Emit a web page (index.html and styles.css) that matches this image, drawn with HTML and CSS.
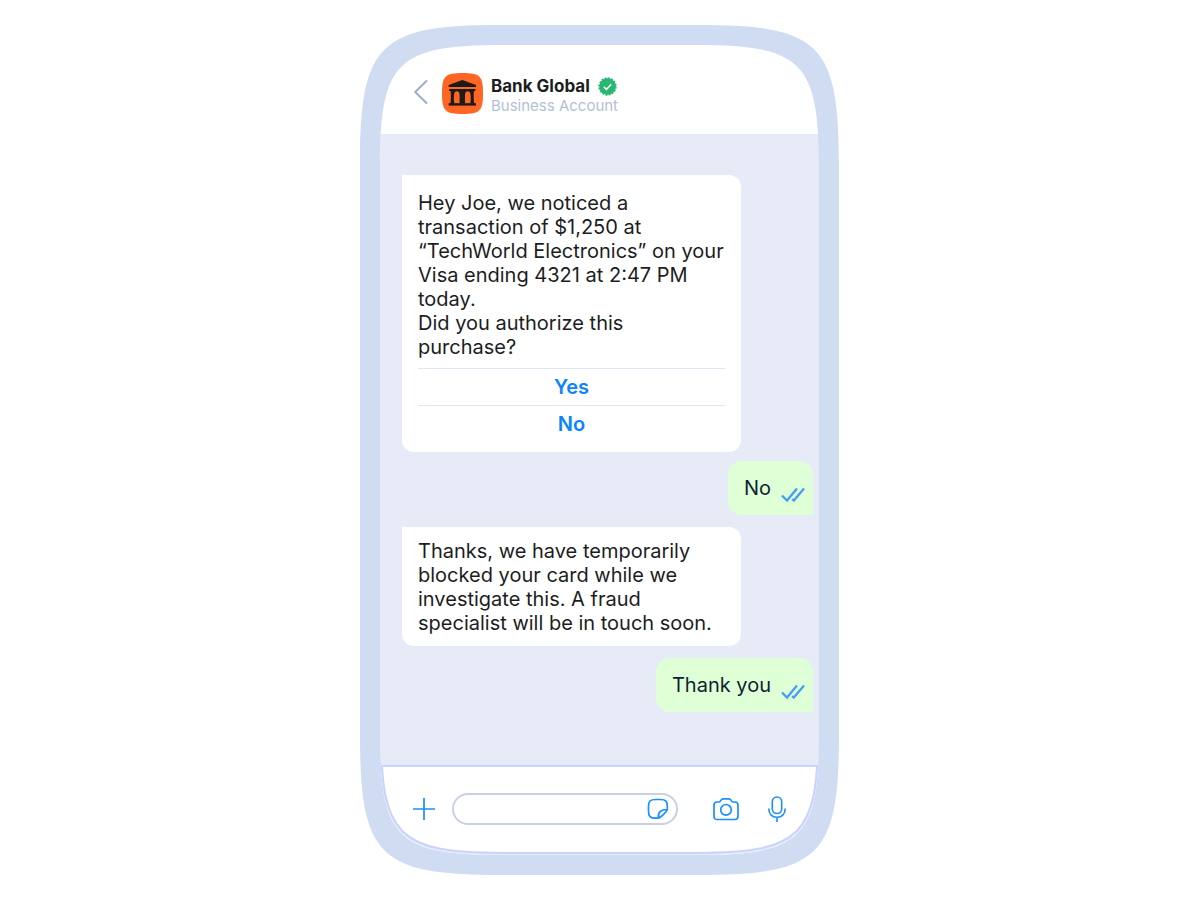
FILE: index.html
```html
<!DOCTYPE html>
<html lang="en">
<head>
<meta charset="utf-8">
<meta name="viewport" content="width=device-width, initial-scale=1">
<title>Bank Global</title>
<link rel="stylesheet" href="styles.css">
</head>
<body>
<main class="phone">
  <header class="header">
    <button class="icon-button back" type="button" aria-label="Back">
      <svg width="14" height="24" viewBox="0 0 14 24" fill="none" stroke="#9aabc6" stroke-width="1.8" stroke-linecap="round" stroke-linejoin="round"><path d="M12.500 1 1.200 12 12.500 23"/></svg>
    </button>
    <svg class="logo" width="41" height="41" viewBox="0 0 41 41" aria-hidden="true">
      <path fill="#ff6624" d="M0 20.500C0 3 3 0 20.500 0S41 3 41 20.500 38 41 20.500 41 0 38 0 20.500Z"/>
      <g fill="#1d1a19">
        <path d="M20.300 7 34 12v2H6.700V12Z"/>
        <path d="M6.700 30.200H34v2.400H6.700Z"/>
        <path d="M7.200 16h26.200v1.900H32c-.5 4-.4 8.500.2 12.800h-4c.8-4 .7-7.500.1-10-.4-1.600-1.200-2.400-2.500-2.400-1.800 0-2.800 1.400-2.800 3.500v8.900h-5.400V21.800c0-2.100-1-3.500-2.800-3.500-1.300 0-2.100.8-2.500 2.400-.6 2.500-.7 6 .1 10h-4c.6-4.300.7-8.800.2-12.800H7.200Z"/>
      </g>
    </svg>
    <div class="account">
      <h1 class="account-name">Bank Global
        <svg width="19" height="19" viewBox="-10 -10 20 20" role="img" aria-label="Verified"><circle r="8.700" fill="#27b770"/><circle r="8.700" fill="none" stroke="#27b770" stroke-width="1.900" stroke-dasharray="2.100 1.316"/><path d="m-3.800.4 2.700 2.700 5-5.400" fill="none" stroke="#fff" stroke-width="1.700"/></svg>
      </h1>
      <p class="account-type">Business Account</p>
    </div>
  </header>

  <section class="chat" aria-label="Conversation">
    <article class="bubble received prompt">
      <p>Hey Joe, we noticed a transaction of $1,250 at “TechWorld Electronics” on your Visa ending 4321 at 2:47 PM today.</p>
      <p>Did you authorize this purchase?</p>
      <div class="choices">
        <button class="choice" type="button">Yes</button>
        <button class="choice" type="button">No</button>
      </div>
    </article>
    <article class="bubble sent">
      <p>No</p>
      <svg class="ticks" width="24" height="16" viewBox="0 0 24 16" role="img" aria-label="Read"><path d="m1 8.500 5 5L16 1.500M11.200 12l1.600 1.500L23 1.500" fill="none" stroke="#459df2" stroke-width="2.300"/></svg>
    </article>
    <article class="bubble received">
      <p>Thanks, we have temporarily blocked your card while we investigate this. A fraud specialist will be in touch soon.</p>
    </article>
    <article class="bubble sent">
      <p>Thank you</p>
      <svg class="ticks" width="24" height="16" viewBox="0 0 24 16" role="img" aria-label="Read"><path d="m1 8.500 5 5L16 1.500M11.200 12l1.600 1.500L23 1.500" fill="none" stroke="#459df2" stroke-width="2.300"/></svg>
    </article>
  </section>

  <form class="composer">
    <button class="icon-button" type="button" aria-label="Add attachment">
      <svg width="22" height="22" viewBox="0 0 22 22" fill="none" stroke="#1890ff" stroke-width="1.700"><path d="M11 0v22M0 11h22"/></svg>
    </button>
    <div class="field">
      <input class="field-input" type="text" aria-label="Message">
      <button class="icon-button" type="button" aria-label="Stickers">
        <svg width="22" height="22" viewBox="0 0 22 22" fill="none" stroke="#1890ff" stroke-width="1.700" stroke-linejoin="round"><path d="M20.300 11.500V8.500C20.300 3 18.500 1.500 13.500 1.500h-5C3.200 1.500 1.500 3.200 1.500 8.500v4.500c0 5.300 1.700 7.200 7 7.200h2.800c2.800-1 8.300-6.400 9-8.700ZM11.300 20.200C11 14 14 11.400 20.300 11.500"/></svg>
      </button>
    </div>
    <div class="media">
      <button class="icon-button" type="button" aria-label="Camera">
        <svg width="26" height="24" viewBox="0 0 26 24" fill="none" stroke="#1890ff" stroke-width="1.700" stroke-linejoin="round"><path d="M1 19V8.200C1 5.800 2 5 4 5h1.800c1.200 0 1.500-.4 2-1.500.6-1.300 1-1.700 2.500-1.700h5.400c1.500 0 1.900.4 2.500 1.700.5 1.100.8 1.500 2 1.500H22c2 0 3 .8 3 3.200V19c0 2.600-1 3.500-3.300 3.500H4.300C2 22.500 1 21.600 1 19Z"/><circle cx="13" cy="12.800" r="5.300"/></svg>
      </button>
      <button class="icon-button" type="button" aria-label="Record voice message">
        <svg width="18" height="26" viewBox="0 0 18 26" fill="none" stroke="#1890ff" stroke-width="1.600"><rect x="4.300" y="1" width="9.400" height="16.500" rx="4.700"/><path d="M.8 12.500c0 5.300 3 8.700 8.200 8.700s8.200-3.400 8.200-8.700M9 21.200V26"/></svg>
      </button>
    </div>
  </form>

  <svg class="frame" viewBox="0 0 480 850" preserveAspectRatio="none" aria-hidden="true">
    <defs><clipPath id="dock"><rect x="0" y="740" width="480" height="110"/></clipPath></defs>
    <path fill="#d0dcf2" fill-rule="evenodd" d="M0 140C0 19 19 0 140 0H339C460 0 479 19 479 140V710C479 831 460 850 339 850H140C19 850 0 831 0 710ZM20 142V708C20 813 37 830 142 830H337C442 830 459 813 459 708V142C459 37 442 20 337 20H142C37 20 20 37 20 142Z"/>
    <g fill="none" clip-path="url(#dock)">
      <path stroke="#e8ecf8" stroke-width="2" d="M21 708C21 812 38 829 142 829H337C441 829 458 812 458 708"/>
      <path stroke="#c8d3ff" stroke-width="2" d="M21 708C21 810 38 828 142 828H337C441 828 458 810 458 708M21 741H458"/>
    </g>
  </svg>
</main>
</body>
</html>
```
FILE: styles.css
```css
* {
  box-sizing: border-box;
}

body {
  margin: 0;
  padding: 25px 16px;
  background: #fff;
  color: #1d1d1f;
  font-family: Inter, "Liberation Sans", sans-serif;
  font-size: 20px;
  line-height: 24px;
}

h1,
p {
  margin: 0;
}

.phone {
  position: relative;
  max-width: 480px;
  margin: 0 auto;
  padding: 20px;
}

.frame {
  position: absolute;
  inset: 0;
  width: 100%;
  height: 100%;
  pointer-events: none;
}

.icon-button {
  display: flex;
  padding: 0;
  border: 0;
  background: none;
  cursor: pointer;
}

.header {
  display: flex;
  align-items: center;
  padding: 25px 34px 18px;
}

.back {
  margin-bottom: 2px;
}

.logo {
  flex: none;
  margin: 0 8px 0 14px;
}

.account {
  padding-top: 6px;
}

.account-name {
  display: flex;
  align-items: center;
  gap: 8px;
  font-size: 17px;
  font-weight: 700;
  line-height: 20px;
}

.account-type {
  color: #b3bfd6;
  font-size: 15px;
  font-weight: 400;
  line-height: 20px;
}

.chat {
  display: flex;
  flex-direction: column;
  gap: 12px;
  margin-right: 1px;
  padding: 41px 6px 53px 22px;
  background: #e7ebf7;
}

.bubble {
  padding: 12px 16px 11px;
  border-radius: 12px;
}

.received {
  align-self: flex-start;
  width: 339px;
  max-width: 90%;
  border-top-left-radius: 0;
  background: #fff;
}

.prompt {
  margin-bottom: -3px;
  padding: 16px 16px 10px;
}

.choices {
  margin-top: 9px;
}

.choice {
  display: block;
  width: 100%;
  height: 37px;
  padding: 0;
  border: 0;
  border-top: 1px solid #dfe6f4;
  background: none;
  color: #0a84ff;
  font: inherit;
  font-weight: 600;
  cursor: pointer;
}

.sent {
  display: flex;
  align-items: flex-end;
  align-self: flex-end;
  gap: 10px;
  padding: 15px 8px 12px 16px;
  border-radius: 14px 14px 0;
  border-bottom-left-radius: 14px;
  background: #dfffd6;
  color: #0f1f33;
}

.sent p {
  padding-bottom: 3px;
}

.composer {
  display: flex;
  align-items: center;
  padding: 28px 34px 30px 33px;
}

.field {
  display: flex;
  flex: 1;
  align-items: center;
  min-width: 0;
  height: 32px;
  margin: 0 35px 0 17px;
  padding-right: 7px;
  border: 2px solid #c8d1e3;
  border-radius: 16px;
}

.field-input {
  flex: 1;
  min-width: 0;
  height: 28px;
  padding: 0 0 0 12px;
  border: 0;
  outline: 0;
  background: none;
  color: inherit;
  font: inherit;
  font-size: 16px;
}

.media {
  display: flex;
  align-items: center;
  gap: 29px;
}
```
